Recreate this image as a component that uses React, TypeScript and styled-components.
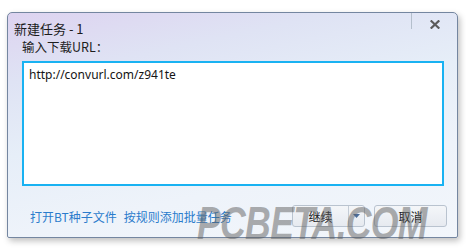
import React from "react";
import styled, { createGlobalStyle } from "styled-components";

const Global = createGlobalStyle`
  html, body { margin: 0; padding: 0; background: #ffffff; }
  body { font-family: "Noto Sans CJK SC", "Noto Sans", sans-serif; }
`;

const Page = styled.div`
  position: relative;
  width: 466px;
  height: 251px;
  overflow: hidden;
  background: #ffffff;
  padding: 12px 0 0 7px;
  box-sizing: border-box;
`;

const Window = styled.div`
  width: 451px;
  height: 226px;
  box-sizing: border-box;
  border: 1px solid #7486a0;
  border-radius: 5px 5px 2px 2px;
  background: linear-gradient(168deg, #ddd3f0 0%, #dfe3f4 22%, #e6eef8 45%, #eef3fa 70%, #f2f6fb 100%);
  box-shadow: 2px 3px 6px rgba(0, 0, 0, 0.25);
  display: flex;
  flex-direction: column;
`;

const TitleBar = styled.div`
  height: 27px;
  display: flex;
  align-items: flex-start;
  justify-content: space-between;
`;

const Title = styled.div`
  font-size: 13px;
  color: #1b1b1b;
  padding: 8px 0 0 6px;
  line-height: 16px;
  white-space: pre;
`;

const CloseBtn = styled.div`
  width: 45px;
  height: 16px;
  border-left: 1px solid #b4bfcc;
  display: flex;
  align-items: flex-end;
  justify-content: center;
`;

const Body = styled.div`
  flex: 1;
  display: flex;
  flex-direction: column;
  padding: 0 13px 0 14px;
`;

const Label = styled.div`
  font-size: 12.5px;
  color: #1e1e1e;
  line-height: 14px;
`;

const UrlBox = styled.div`
  margin-top: 7px;
  height: 125px;
  box-sizing: border-box;
  background: #ffffff;
  border: 2px solid #19b2f2;
  padding: 3px 5px;
  font-family: "Noto Sans", "Open Sans", sans-serif;
  font-size: 12px;
  color: #141414;
  line-height: 18px;
`;

const Footer = styled.div`
  display: flex;
  align-items: center;
  justify-content: space-between;
  margin-top: 19px;
  padding-left: 8px;
`;

const Links = styled.div`
  display: flex;
  gap: 7px;
  padding-top: 2px;
`;

const Link = styled.span`
  font-size: 12px;
  color: #2b7ccc;
  line-height: 14px;
`;

const Buttons = styled.div`
  display: flex;
  gap: 9px;
  margin-right: -3px;
`;

const Button = styled.div<{ $w: number }>`
  width: ${(p) => p.$w}px;
  height: 22px;
  box-sizing: border-box;
  border: 1px solid #b9c3cf;
  border-radius: 3px;
  background: linear-gradient(#f4f6f9, #e6eaf0);
  display: flex;
  align-items: stretch;
  font-size: 12px;
  color: #1a1a1a;
`;

const BtnLabel = styled.div`
  flex: 1;
  display: flex;
  align-items: center;
  justify-content: center;
`;

const DropPart = styled.div`
  width: 15px;
  border-left: 1px solid #c4ccd6;
  display: flex;
  align-items: center;
  justify-content: center;
`;

const Watermark = styled.div`
  position: absolute;
  left: 197px;
  top: 197px;
  font-family: "Liberation Sans", Arial, sans-serif;
  font-weight: bold;
  font-style: italic;
  font-size: 47px;
  letter-spacing: -1px;
  color: rgba(95, 95, 95, 0.5);
  line-height: 52px;
  transform: scaleX(0.76);
  transform-origin: left top;
  pointer-events: none;
  white-space: nowrap;
`;

export default function App() {
  return (
    <Page>
      <Global />
      <Window>
        <TitleBar>
          <Title>新建任务 - 1</Title>
          <CloseBtn>
            <svg width="10" height="9" viewBox="0 0 10 9">
              <path d="M1.5 1.2 L8.5 7.8 M8.5 1.2 L1.5 7.8" stroke="#5a5a5a" strokeWidth="2.2" strokeLinecap="square" />
            </svg>
          </CloseBtn>
        </TitleBar>
        <Body>
          <Label>输入下载URL：</Label>
          <UrlBox>http://convurl.com/z941te</UrlBox>
          <Footer>
            <Links>
              <Link>打开BT种子文件</Link>
              <Link>按规则添加批量任务</Link>
            </Links>
            <Buttons>
              <Button $w={73}>
                <BtnLabel>继续</BtnLabel>
                <DropPart>
                  <svg width="7" height="4" viewBox="0 0 7 4">
                    <path d="M0 0 L7 0 L3.5 4 Z" fill="#4a6d99" />
                  </svg>
                </DropPart>
              </Button>
              <Button $w={73}>
                <BtnLabel>取消</BtnLabel>
              </Button>
            </Buttons>
          </Footer>
        </Body>
      </Window>
      <Watermark>PCBETA.COM</Watermark>
    </Page>
  );
}
